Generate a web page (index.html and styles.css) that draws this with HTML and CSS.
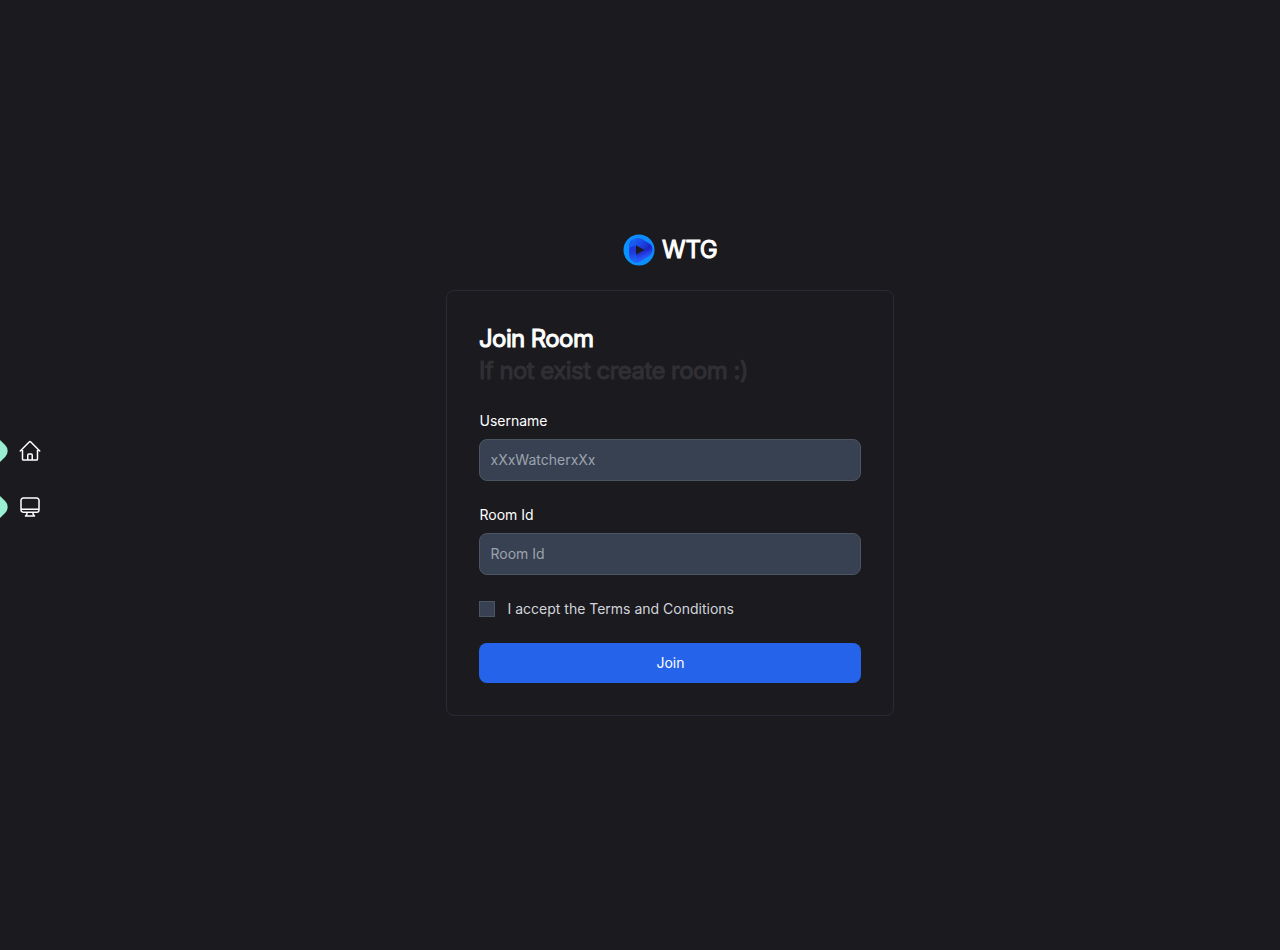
FILE: index.html
```html
<!DOCTYPE html>
<html lang="en">
<head>
<meta charset="utf-8">
<title>WTG</title>
<link rel="stylesheet" href="styles.css">
</head>
<body>
<div class="app">
  <nav class="sidebar">
    <a class="nav-item" aria-label="Home">
      <span class="nav-marker"></span>
      <svg class="nav-icon" viewBox="0 0 24 24"><path d="M2.25 12l8.954-8.955c.44-.439 1.152-.439 1.591 0L21.75 12M4.5 9.75v10.125c0 .621.504 1.125 1.125 1.125H9.75v-4.875c0-.621.504-1.125 1.125-1.125h2.25c.621 0 1.125.504 1.125 1.125V21h4.125c.621 0 1.125-.504 1.125-1.125V9.75M8.25 21h8.25"/></svg>
    </a>
    <a class="nav-item" aria-label="Rooms">
      <span class="nav-marker"></span>
      <svg class="nav-icon" viewBox="0 0 24 24"><path d="M9 17.25v1.007a3 3 0 01-.879 2.122L7.5 21h9l-.621-.621A3 3 0 0115 18.257V17.25m6-12V15a2.25 2.25 0 01-2.25 2.25H5.25A2.25 2.25 0 013 15V5.25m18 0A2.25 2.25 0 0018.75 3H5.25A2.25 2.25 0 003 5.25m18 0V14.25H3V5.25"/></svg>
    </a>
  </nav>
  <main class="content">
    <a class="brand">
      <svg class="brand-logo" viewBox="0 0 32 32">
        <defs>
          <linearGradient id="ring" x1="0" y1="1" x2="1" y2="0"><stop offset="0" stop-color="#0799ff"/><stop offset=".5" stop-color="#0b8dff"/><stop offset="1" stop-color="#0d8cff"/></linearGradient>
          <linearGradient id="left" gradientUnits="userSpaceOnUse" x1="9" y1="8" x2="12" y2="28"><stop offset="0" stop-color="#1b2fd4"/><stop offset=".5" stop-color="#2039dc"/><stop offset="1" stop-color="#1a6cff"/></linearGradient>
          <linearGradient id="top" gradientUnits="userSpaceOnUse" x1="8" y1="6" x2="22" y2="18"><stop offset="0" stop-color="#1468fa"/><stop offset=".6" stop-color="#1b43e4"/><stop offset="1" stop-color="#1c27c4"/></linearGradient>
          <linearGradient id="low" gradientUnits="userSpaceOnUse" x1="18" y1="17" x2="22" y2="27"><stop offset="0" stop-color="#1d22c0"/><stop offset=".45" stop-color="#2545ea"/><stop offset="1" stop-color="#2270ff"/></linearGradient>
        </defs>
        <circle cx="16" cy="16" r="15.500" fill="url(#ring)"/>
        <path d="M16 28.500c-6 1-9.800-3-9.800-8V12c0-4 3-7 6.800-7l5 4-5 2.200v9.600l8 2z" fill="url(#left)"/>
        <path d="M8 8C10 4 15 2.800 19 5l7 4.200c3.500 2.300 4.500 6 1.500 9-2 2-4 1.300-6.200-.200L13 13c-2-1.300-4.500-1-6.800 1.500C6 11.800 6.500 10 8 8z" fill="url(#top)"/>
        <path d="M21.300 16l6-5.500c3.200 4 2.800 9-1.300 11.500l-8 5.200c-2.500 1.500-5.500 1.800-8 .600 4-.500 5.500-3 3-7z" fill="url(#low)"/>
        <path d="M13 11.200L21.300 16 13 20.800z" fill="#1b1a1e"/>
      </svg>
      <span>WTG</span>
    </a>
    <section class="card">
      <h1 class="title">Join Room<br><span class="title-hint">If not exist create room :)</span></h1>
      <form class="form">
        <div class="field">
          <label class="label" for="username">Username</label>
          <input class="input" id="username" type="text" placeholder="xXxWatcherxXx">
        </div>
        <div class="field">
          <label class="label" for="room">Room Id</label>
          <input class="input" id="room" type="text" placeholder="Room Id">
        </div>
        <div class="terms">
          <input class="checkbox" id="terms" type="checkbox">
          <label for="terms">I accept the Terms and Conditions</label>
        </div>
        <button class="button" type="button">Join</button>
      </form>
    </section>
  </main>
</div>
</body>
</html>
```
FILE: styles.css
```css
*, *::before, *::after { box-sizing: border-box; }
body {
  margin: 0;
  background: #1b1a1e;
  color: #fff;
  font: 14px/20px Inter, "Liberation Sans", sans-serif;
}
.app { display: flex; height: 100vh; overflow: hidden; }
.sidebar {
  width: 60px;
  padding-top: 8px;
  display: flex;
  flex-direction: column;
  justify-content: center;
  gap: 16px;
}
.nav-item {
  position: relative;
  height: 40px;
  display: flex;
  align-items: center;
  justify-content: center;
}
.nav-marker {
  position: absolute;
  left: -18px;
  top: 8px;
  width: 24px;
  height: 24px;
  border-radius: 8px;
  background: #99efcf;
  transform: rotate(45deg);
}
.nav-icon {
  width: 24px;
  height: 24px;
  fill: none;
  stroke: #fff;
  stroke-width: 1.5;
  stroke-linecap: round;
  stroke-linejoin: round;
}
.content {
  flex: 1;
  display: flex;
  flex-direction: column;
  align-items: center;
  justify-content: center;
}
.brand {
  display: flex;
  align-items: center;
  gap: 7.5px;
  margin-bottom: 24px;
  font-size: 24px;
  line-height: 32px;
  font-weight: 400;
  letter-spacing: -0.3px;
  -webkit-text-stroke: 1px currentColor;
}
.brand-logo { width: 32px; height: 32px; }
.card {
  width: 448px;
  padding: 32px;
  border: 1px solid #272b35;
  border-radius: 8px;
}
.title {
  margin: 0 0 24px;
  font-size: 24px;
  line-height: 32px;
  font-weight: 400;
  letter-spacing: -0.025em;
  -webkit-text-stroke: 1px currentColor;
}
.title-hint { color: #303034; letter-spacing: -0.56px; -webkit-text-stroke-color: #303034; }
.form { display: flex; flex-direction: column; gap: 24px; }
.field { display: flex; flex-direction: column; gap: 8px; }
.label { padding-left: 0.5px; }
.input {
  width: 100%;
  height: 42px;
  margin: 0;
  padding: 9px 10px 11px 10.5px;
  border: 1px solid #4b5563;
  border-radius: 8px;
  background: #374151;
  color: #fff;
  font: inherit;
}
.input::placeholder { color: #9ca3af; opacity: 1; }
.terms { display: flex; align-items: center; gap: 12.5px; color: #d1d5db; }
.checkbox {
  appearance: none;
  width: 16px;
  height: 16px;
  margin: 0;
  border: 1px solid #4b5563;
  background: #374151;
}
.button {
  height: 40px;
  padding: 0 0 0 1px;
  border: 0;
  border-radius: 8px;
  background: #2563eb;
  color: #fff;
  font: inherit;
}
```
